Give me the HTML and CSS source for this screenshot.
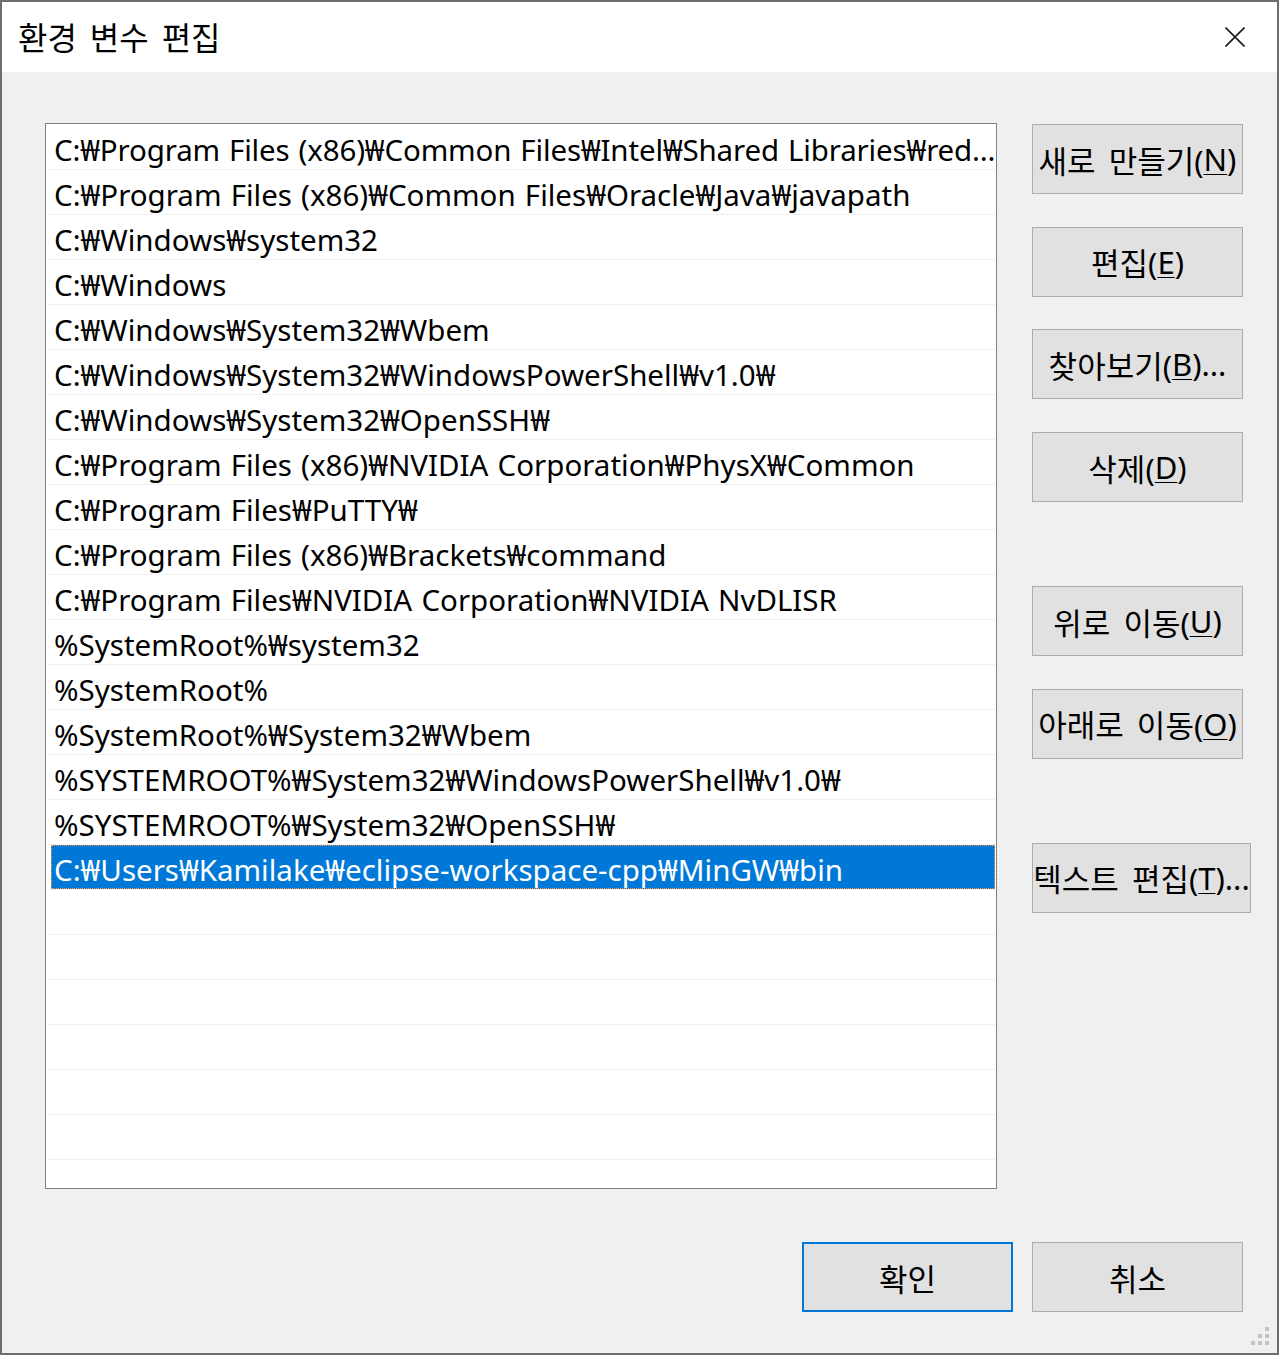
FILE: index.html
```html
<!DOCTYPE html>
<html lang="ko">
<head>
<meta charset="utf-8">
<title>환경 변수 편집</title>
<link rel="stylesheet" href="styles.css">
</head>
<body>
<div class="window">
  <header class="titlebar">
    <h1 class="title">환경 변수 편집</h1>
    <button class="close" aria-label="닫기">
      <svg width="20" height="20" viewBox="0 0 20 20"><path d="M0.5 0.5 L19.5 19.5 M19.5 0.5 L0.5 19.5" stroke="#1a1a1a" stroke-width="1.6" fill="none"/></svg>
    </button>
  </header>
  <main class="body">
    <div class="main">
      <ul class="list">
        <li class="row tight">C:₩Program Files (x86)₩Common Files₩Intel₩Shared Libraries₩red...</li>
        <li class="row">C:₩Program Files (x86)₩Common Files₩Oracle₩Java₩javapath</li>
        <li class="row">C:₩Windows₩system32</li>
        <li class="row">C:₩Windows</li>
        <li class="row">C:₩Windows₩System32₩Wbem</li>
        <li class="row">C:₩Windows₩System32₩WindowsPowerShell₩v1.0₩</li>
        <li class="row">C:₩Windows₩System32₩OpenSSH₩</li>
        <li class="row">C:₩Program Files (x86)₩NVIDIA Corporation₩PhysX₩Common</li>
        <li class="row">C:₩Program Files₩PuTTY₩</li>
        <li class="row">C:₩Program Files (x86)₩Brackets₩command</li>
        <li class="row">C:₩Program Files₩NVIDIA Corporation₩NVIDIA NvDLISR</li>
        <li class="row">%SystemRoot%₩system32</li>
        <li class="row">%SystemRoot%</li>
        <li class="row">%SystemRoot%₩System32₩Wbem</li>
        <li class="row">%SYSTEMROOT%₩System32₩WindowsPowerShell₩v1.0₩</li>
        <li class="row">%SYSTEMROOT%₩System32₩OpenSSH₩</li>
        <li class="row selected"><span class="sel">C:₩Users₩Kamilake₩eclipse-workspace-cpp₩MinGW₩bin</span></li>
        <li class="row"></li>
        <li class="row"></li>
        <li class="row"></li>
        <li class="row"></li>
        <li class="row"></li>
        <li class="row"></li>
        <li class="row"></li>
      </ul>
      <div class="actions">
        <div class="group">
          <button class="btn">새로 만들기(<u>N</u>)</button>
          <button class="btn">편집(<u>E</u>)</button>
          <button class="btn">찾아보기(<u>B</u>)...</button>
          <button class="btn">삭제(<u>D</u>)</button>
        </div>
        <div class="group">
          <button class="btn">위로 이동(<u>U</u>)</button>
          <button class="btn">아래로 이동(<u>O</u>)</button>
        </div>
        <div class="group">
          <button class="btn wide">텍스트 편집(<u>T</u>)...</button>
        </div>
      </div>
    </div>
    <div class="footer">
      <button class="btn default">확인</button>
      <button class="btn">취소</button>
    </div>
  </main>
  <svg class="grip" width="20" height="20" viewBox="0 0 20 20">
    <rect x="14" y="0" width="4" height="4" fill="#c4c4c4"/>
    <rect x="7" y="7" width="4" height="4" fill="#c4c4c4"/>
    <rect x="14" y="7" width="4" height="4" fill="#c4c4c4"/>
    <rect x="0" y="14" width="4" height="4" fill="#c4c4c4"/>
    <rect x="7" y="14" width="4" height="4" fill="#c4c4c4"/>
    <rect x="14" y="14" width="4" height="4" fill="#c4c4c4"/>
  </svg>
</div>
</body>
</html>
```

FILE: styles.css
```css
* { box-sizing: border-box; }

html, body {
  margin: 0;
  padding: 0;
  background: #f0f0f0;
}

body {
  font-family: "Noto Sans", "Noto Sans CJK KR", sans-serif;
  color: #000;
}

.window {
  position: relative;
  width: 1279px;
  height: 1355px;
  border: 2px solid #6e6e6e;
  background: #f0f0f0;
  display: flex;
  flex-direction: column;
  overflow: hidden;
}

.titlebar {
  height: 70px;
  flex: none;
  background: #fff;
  display: flex;
  align-items: center;
  padding-left: 16px;
}

.title {
  margin: 0;
  font-size: 32px;
  word-spacing: 4px;
  font-weight: 400;
  font-family: "Noto Sans CJK KR", "Noto Sans", sans-serif;
  line-height: 1;
  padding-bottom: 2px;
}

.close {
  margin-left: auto;
  margin-right: 32px;
  width: 20px;
  height: 20px;
  padding: 0;
  border: 0;
  background: transparent;
  display: flex;
}

.body {
  flex: 1;
  padding: 51px 34px 0 43px;
  display: flex;
  flex-direction: column;
}

.main {
  display: flex;
  align-items: flex-start;
  gap: 35px;
}

.list {
  width: 952px;
  height: 1066px;
  margin: 0;
  padding: 1px 1px 0 1px;
  list-style: none;
  background: #fff;
  border: 1px solid #7f8188;
  overflow: hidden;
  flex: none;
}

.row {
  height: 45px;
  border-bottom: 1px solid #efefef;
  padding-left: 7px;
  padding-top: 3px;
  font-size: 29.5px;
  word-spacing: 1.5px;
  line-height: 44px;
  white-space: nowrap;
}

.row.tight {
  letter-spacing: -0.15px;
}

.row.selected {
  padding-left: 4px;
  padding-top: 0;
}

.sel {
  display: block;
  height: 44px;
  background: #0078d7;
  color: #fff;
  border: 1px dotted #ff9a3c;
  padding-left: 2px;
  padding-top: 3px;
  line-height: 42px;
}

.actions {
  margin-top: 1px;
  display: flex;
  flex-direction: column;
  gap: 84px;
}

.group {
  display: flex;
  flex-direction: column;
  gap: 32.7px;
}

.btn {
  width: 211px;
  height: 70px;
  padding: 0;
  background: #e1e1e1;
  border: 1px solid #adadad;
  font-family: "Noto Sans", "Noto Sans CJK KR", sans-serif;
  font-size: 31px;
  word-spacing: 5px;
  color: #000;
  white-space: nowrap;
  display: flex;
  align-items: center;
  justify-content: center;
  overflow: visible;
}

.btn u {
  text-decoration-thickness: 1px;
  text-underline-offset: 3px;
}

.btn.wide {
  width: 219px;
}

.btn.default {
  border: 2px solid #0078d7;
}

.footer {
  margin-top: 53px;
  display: flex;
  justify-content: flex-end;
  gap: 19px;
}

.grip {
  position: absolute;
  right: 6px;
  bottom: 6px;
}
```
